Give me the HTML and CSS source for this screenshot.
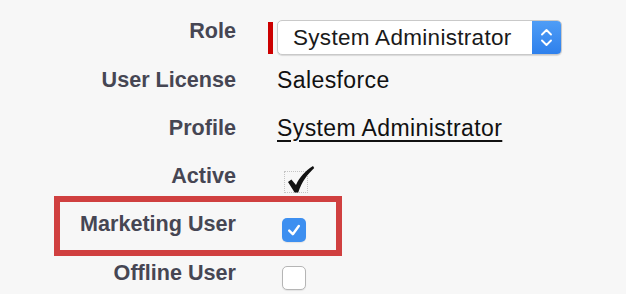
FILE: index.html
```html
<!DOCTYPE html>
<html lang="en">
<head>
  <meta charset="UTF-8" />
  <title>User Detail</title>
  <link rel="stylesheet" href="styles.css">
</head>
<body>

<div class="detail">

  <div class="row">
    <div class="label">Role</div>
    <div class="value">
      <span class="required-bar"></span>
      <div class="select">
        <span class="select-text">System Administrator</span>
        <span class="stepper">
          <svg width="29" height="33" viewBox="0 0 29 33">
            <path d="M10 13.5 L14.5 9 L19 13.5" fill="none" stroke="#fff" stroke-width="1.9" stroke-linecap="round" stroke-linejoin="round"/>
            <path d="M10 19.5 L14.5 24 L19 19.5" fill="none" stroke="#fff" stroke-width="1.9" stroke-linecap="round" stroke-linejoin="round"/>
          </svg>
        </span>
      </div>
    </div>
  </div>

  <div class="row">
    <div class="label">User License</div>
    <div class="value">Salesforce</div>
  </div>

  <div class="row">
    <div class="label">Profile</div>
    <div class="value"><a class="link" href="#">System Administrator</a></div>
  </div>

  <div class="row">
    <div class="label">Active</div>
    <div class="value check-cell">
      <span class="dotted-box">
        <svg class="tick" width="27" height="27" viewBox="0 0 27 27">
          <path d="M0 16 L3.4 13.4 L8 19 C11.6 11 17.6 4.5 25 0 L26.2 2 C19.6 8.2 13.8 15.6 10.2 26.6 L6.6 26.6 Z" fill="#111"/>
        </svg>
      </span>
    </div>
  </div>

  <div class="row highlight">
    <div class="label">Marketing User</div>
    <div class="value check-cell">
      <span class="checkbox checked">
        <svg width="24" height="24" viewBox="0 0 24 24">
          <path d="M7.2 12.6 L10.8 16.2 L16.8 8" fill="none" stroke="#fff" stroke-width="2.4" stroke-linecap="round" stroke-linejoin="round"/>
        </svg>
      </span>
    </div>
  </div>

  <div class="row">
    <div class="label">Offline User</div>
    <div class="value check-cell">
      <span class="checkbox"></span>
    </div>
  </div>

</div>

</body>
</html>
```

FILE: styles.css
```css
body {
  margin: 0;
  background: #f7f7f7;
  font-family: "Liberation Sans", Arial, sans-serif;
}
.detail {
  padding-top: 7.4px;
}
.row {
  display: grid;
  grid-template-columns: 236px 1fr;
  column-gap: 41px;
  height: 48.25px;
  position: relative;
}
.label {
  text-align: right;
  font-weight: bold;
  font-size: 21.6px;
  line-height: 48.25px;
  color: #464653;
  white-space: nowrap;
}
.value {
  display: flex;
  align-items: flex-start;
  font-size: 23px;
  letter-spacing: 0.4px;
  line-height: 48.25px;
  color: #111;
  white-space: nowrap;
}
.link {
  color: #111;
  text-decoration: underline;
  text-decoration-thickness: 2px;
  text-underline-offset: 4px;
}

/* role picklist */
.required-bar {
  width: 5px;
  height: 32px;
  margin: 14.6px 4px 0 -9px;
  background: #c00;
}
.select {
  display: flex;
  width: 285px;
  height: 35px;
  margin-top: 12.6px;
  box-sizing: border-box;
  border: 1px solid #c9c9c9;
  border-radius: 5px;
  background: #fff;
  box-shadow: 0 1px 1px rgba(0,0,0,0.12);
  overflow: hidden;
}
.select-text {
  flex: 1;
  padding-left: 15px;
  font-size: 22.5px;
  letter-spacing: 0.3px;
  line-height: 33px;
  color: #1a1a1a;
}
.stepper {
  width: 29px;
  height: 33px;
  background: linear-gradient(#4f9df6, #2e80ec);
}
.stepper svg {
  display: block;
}

/* checkboxes */
.check-cell {
  padding-top: 17.5px;
}
.dotted-box {
  position: relative;
  width: 24px;
  height: 22px;
  margin: 1.4px 0 0 7px;
  box-sizing: border-box;
  border: 1.5px dotted #c4c4c4;
}
.tick {
  position: absolute;
  left: 3px;
  top: -6px;
}
.checkbox {
  width: 24px;
  height: 24px;
  margin-left: 5px;
  box-sizing: border-box;
  border: 1.5px solid #b5b5b5;
  border-radius: 5px;
  background: #fff;
  box-shadow: 0 1px 1px rgba(0,0,0,0.08);
}
.checkbox.checked {
  border: none;
  background: #3d8ff0;
}
.checkbox svg {
  display: block;
}

/* annotation around the marketing user row */
.highlight::after {
  content: "";
  position: absolute;
  left: 54px;
  top: -4.4px;
  width: 288px;
  height: 60px;
  box-sizing: border-box;
  border: 6px solid #d04040;
}
```
